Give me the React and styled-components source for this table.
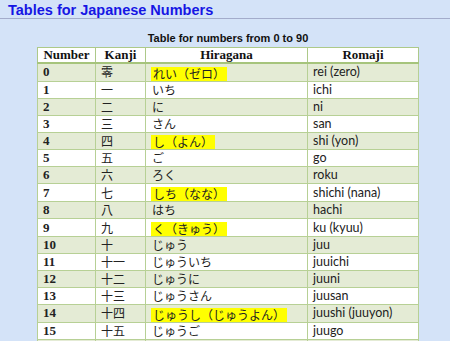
import React from 'react';
import styled, { createGlobalStyle } from 'styled-components'


const rows = [
  { n: '0', kanji: '零', kana: 'れい（ゼロ）', romaji: 'rei (zero)', mark: true },
  { n: '1', kanji: '一', kana: 'いち', romaji: 'ichi' },
  { n: '2', kanji: '二', kana: 'に', romaji: 'ni' },
  { n: '3', kanji: '三', kana: 'さん', romaji: 'san' },
  { n: '4', kanji: '四', kana: 'し（よん）', romaji: 'shi (yon)', mark: true },
  { n: '5', kanji: '五', kana: 'ご', romaji: 'go' },
  { n: '6', kanji: '六', kana: 'ろく', romaji: 'roku' },
  { n: '7', kanji: '七', kana: 'しち（なな）', romaji: 'shichi (nana)', mark: true },
  { n: '8', kanji: '八', kana: 'はち', romaji: 'hachi' },
  { n: '9', kanji: '九', kana: 'く（きゅう）', romaji: 'ku (kyuu)', mark: true },
  { n: '10', kanji: '十', kana: 'じゅう', romaji: 'juu' },
  { n: '11', kanji: '十一', kana: 'じゅういち', romaji: 'juuichi' },
  { n: '12', kanji: '十二', kana: 'じゅうに', romaji: 'juuni' },
  { n: '13', kanji: '十三', kana: 'じゅうさん', romaji: 'juusan' },
  { n: '14', kanji: '十四', kana: 'じゅうし（じゅうよん）', romaji: 'juushi (juuyon)', mark: true },
  { n: '15', kanji: '十五', kana: 'じゅうご', romaji: 'juugo' },
];


function App() {
  return (
    <>
      <GlobalStyle />
      <Title>Tables for Japanese Numbers</Title>
      <NumTable>
        <Caption>Table for numbers from 0 to 90</Caption>
        <colgroup>
          <col style={{ width: 58 }} />
          <col style={{ width: 50 }} />
          <col style={{ width: 162 }} />
          <col style={{ width: 111 }} />
        </colgroup>
        <thead>
          <tr>
            <Th>Number</Th>
            <Th>Kanji</Th>
            <Th>Hiragana</Th>
            <Th>Romaji</Th>
          </tr>
        </thead>
        <tbody>
          {rows.map((r, i) => (
            <Row key={r.n} $alt={i % 2 === 0}>
              <NumCell>{r.n}</NumCell>
              <JpCell>{r.kanji}</JpCell>
              <KanaCell>{r.mark ? <Mark>{r.kana}</Mark> : r.kana}</KanaCell>
              <RomajiCell>{r.romaji}</RomajiCell>
            </Row>
          ))}
          {/* next row, only its top edge shows in the window */}
          <Row $alt>
            <NumCell />
            <JpCell />
            <KanaCell />
            <RomajiCell />
          </Row>
        </tbody>
      </NumTable>
    </>
  );
}



// CSS ----------------------------------------------------------------

const GlobalStyle = createGlobalStyle`
	html, body {
		margin: 0;
		background: #d4e3f8;
		overflow: hidden;
	}
`

const Title = styled.h1`
	margin: 0;
	padding: 2px 8px 0;
	height: 16px;
	border-bottom: 1px solid #a3accb;
	font-family: "Liberation Sans", Arial, sans-serif;
	font-size: 14.5px;
	line-height: 16px;
	font-weight: bold;
	color: #1616e4;
	white-space: nowrap;
`

const NumTable = styled.table`
	margin: 0 0 0 37px;
	width: 382px;
	table-layout: fixed;
	border-collapse: collapse;
	border: 1px solid #adc989;
`

const Caption = styled.caption`
	height: 28px;
	box-sizing: border-box;
	padding-top: 12px;
	font-family: "Liberation Sans", Arial, sans-serif;
	font-size: 11px;
	line-height: 14px;
	font-weight: bold;
	color: #111;
`

const Th = styled.th`
	height: 14px;
	padding: 0 4px;
	background: #fff;
	border: 1px solid #adc989;
	border-bottom: 2px solid #a6c47c;
	font-family: "Liberation Serif", "Times New Roman", serif;
	font-size: 13px;
	line-height: 14px;
	font-weight: bold;
	text-align: center;
	color: #111;
`

const Row = styled.tr`
	background: ${(p) => (p.$alt ? '#e4ebd5' : '#ffffff')};
	td {
		height: 16px;
		padding: 0 5px;
		border: 1px solid #b7d095;
		line-height: 16px;
		text-align: left;
		white-space: nowrap;
		overflow: hidden;
		color: #222;
	}
`

const NumCell = styled.td`
	font-family: "Liberation Serif", "Times New Roman", serif;
	font-size: 13px;
	font-weight: bold;
`

const JpCell = styled.td`
	font-family: "Noto Sans CJK JP", sans-serif;
	font-size: 12px;
`

const KanaCell = styled(JpCell)`
	&& {
		padding-left: 6px;
	}
`

const Mark = styled.span`
	display: inline-block;
	height: 14px;
	line-height: 14px;
	padding: 0 2px;
	margin-left: -1px;
	vertical-align: middle;
	background: #ffff00;
`

const RomajiCell = styled.td`
	font-family: Lato, "Liberation Sans", sans-serif;
	font-size: 12.5px;
`



export default App;
